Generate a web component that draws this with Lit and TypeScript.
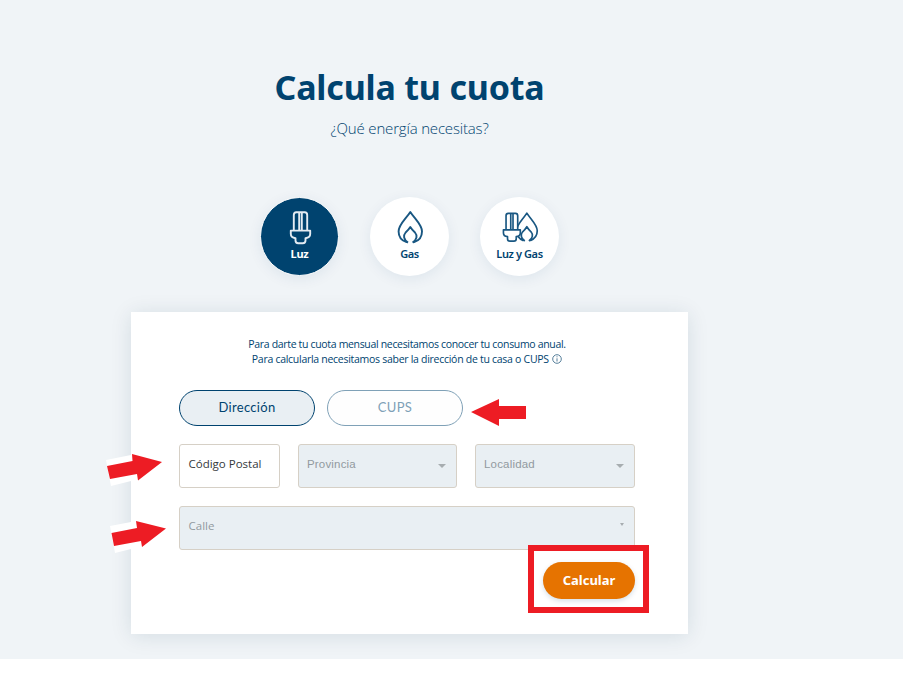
import { LitElement, html, css, svg } from "lit";
import { customElement } from "lit/decorators.js";

const bulb = svg`<path d="M5.800 20.500V5Q5.800 2.200 8.300 2.200H16.700Q19.200 2.200 19.200 5V20.500M11.200 2.500V20.500M13.800 2.500V20.500M2.800 20.600H22.200V24Q22.200 27.600 17.500 28.200V30.500Q17.500 33.200 14.800 33.200H10.200Q7.500 33.200 7.500 30.500V28.200Q2.800 27.600 2.800 24Z"/>`;
const flame = svg`<path d="M9.500 32.200C4.500 30.500 1.600 26.500 1.600 21.500C1.600 14.500 8.500 9.500 13.300 2C18.100 9.500 25 14.500 25 21.500C25 26.500 22.100 30.500 17.100 32.200M11 32.600C6.500 29.500 6 25.500 8.600 22.500Q11.600 19.800 13.300 17Q15 19.800 18 22.500C20.600 25.500 20.100 29.500 15.600 32.600"/>`;

@customElement("app-root")
export class AppRoot extends LitElement {
  static styles = css`
    :host { display: block; width: 903px; height: 675px; background: #fff; overflow: hidden; }
    * { box-sizing: border-box; }
    .stage { position: relative; height: 659px; background: #f0f4f7; color: #00436f; font-family: "Open Sans", sans-serif; overflow: hidden; }
    .content { width: 819px; display: flex; flex-direction: column; align-items: center; padding-top: 66px; }
    h1 { margin: 0; font: 700 34px/42px "Noto Sans", sans-serif; letter-spacing: -.2px; white-space: nowrap; }
    .sub { margin: 10px 0 0; font-weight: 300; font-size: 15px; line-height: 20px; letter-spacing: -.17px; white-space: nowrap; }
    .types { display: flex; gap: 31px; margin-top: 59px; }
    .type { width: 79px; height: 79px; border-radius: 50%; background: #fff; box-shadow: 0 3px 14px #00437014; display: flex; flex-direction: column; align-items: center; padding-top: 13px; font: 600 11px/14px "Noto Sans", sans-serif; letter-spacing: -.4px; }
    .type.on { background: #00436f; border: 1px solid #fff; padding-top: 12px; color: #fff; font-weight: 700; letter-spacing: -.2px; }
    .type svg { height: 35px; margin-bottom: 2px; fill: none; stroke: #195782; stroke-width: 1.9; stroke-linejoin: round; }
    .type.on svg { stroke: #e4ecf3; }
    .type .over { fill: #fff; }
    .card { width: 557px; height: 322px; margin-top: 36px; background: #fff; box-shadow: 0 2px 20px #00304a1e; padding: 25px 53px 0 48px; }
    .intro { font-size: 10.500px; line-height: 15px; text-align: center; margin: 0; white-space: nowrap; letter-spacing: -.33px; }
    .intro span { letter-spacing: -.28px; }
    .intro svg { width: 10px; height: 10px; vertical-align: -1px; margin-left: 1px; fill: none; stroke: #43718f; stroke-width: .9; }
    .tabs { display: flex; gap: 12px; margin-top: 23px; }
    .tab { width: 136px; height: 36px; border: 1px solid #00436f; border-radius: 18px; background: #e9eff3; font: 400 13px/33px Lato, sans-serif; letter-spacing: .3px; text-align: center; }
    .tab.off { background: #fefefe; border-color: #7fa1b7; color: #7fa1b7; }
    .fields { display: grid; grid-template-columns: 101px 159px 160px; column-gap: 18px; row-gap: 18px; margin-top: 18px; }
    .field { height: 44px; border: 1px solid #d6d0c6; border-radius: 3px; background: #e9eff3; color: #929a9f; padding: 0 10px 6px 8px; display: flex; align-items: center; justify-content: space-between; font-size: 11.500px; white-space: nowrap; }
    .field.lib { font-family: "Liberation Sans", sans-serif; letter-spacing: .18px; padding-bottom: 4px; }
    .field.input { background: #fff; color: #35393c; padding-left: 8.500px; }
    .field.wide { grid-column: 1 / -1; padding-left: 8.500px; }
    .caret { border: 4px solid transparent; border-top-color: #a7adb0; border-bottom: 0; margin-top: 4px; }
    .caret.small { border-width: 2.500px; border-top-width: 3px; border-bottom: 0; margin-top: -1px; }
    .actions { display: flex; justify-content: flex-end; margin-top: 12px; }
    .calc { width: 92px; height: 37px; border-radius: 19px; background: #e67300; color: #fff; font: 700 13px/37px "Noto Sans", sans-serif; text-align: center; box-shadow: 0 2px 5px #0043702b; }
    .marks { position: absolute; left: 0; top: 0; width: 903px; height: 659px; pointer-events: none; }
  `;

  render() {
    return html`<div class="stage">
      <div class="content">
        <h1>Calcula tu cuota</h1>
        <p class="sub">¿Qué energía necesitas?</p>
        <div class="types">
          <div class="type on"><svg width="24" height="35" viewBox="0 0 24 35">${bulb}</svg><span>Luz</span></div>
          <div class="type"><svg width="26" height="35" viewBox="0 0 26 35">${flame}</svg><span>Gas</span></div>
          <div class="type"><svg width="38" height="35" viewBox="0 0 38 35">
            <g transform="translate(14 1.300) scale(.89 .91)">${flame}</g>
            <g class="over" transform="translate(0 1.300) scale(.87 .9)">${bulb}</g>
          </svg><span>Luz y Gas</span></div>
        </div>
        <div class="card">
          <p class="intro">Para darte tu cuota mensual necesitamos conocer tu consumo anual.<br><span>Para calcularla necesitamos saber la dirección de tu casa o CUPS</span> <svg viewBox="0 0 10 10"><circle cx="5" cy="5" r="4.300"/><path d="M5 4.300V7.500M5 2.300V3.300"/></svg></p>
          <div class="tabs"><div class="tab">Dirección</div><div class="tab off">CUPS</div></div>
          <div class="fields">
            <div class="field input"><span>Código Postal</span></div>
            <div class="field lib"><span>Provincia</span><i class="caret"></i></div>
            <div class="field lib"><span>Localidad</span><i class="caret"></i></div>
            <div class="field wide"><span>Calle</span><i class="caret small"></i></div>
          </div>
          <div class="actions"><div class="calc">Calcular</div></div>
        </div>
      </div>
      <svg class="marks" viewBox="0 0 903 659">
        <path fill="#fff" d="M106 460L131 455V481L111 486ZM110 526L131 522V549L115 553Z"/>
        <path fill="#ed1c24" d="M107 466L132.500 461L132 454L162 462L138 480.500L137 474L110 479ZM111.500 533L137 528L136 521L166 528.500L142 547L141 541L114 546ZM471 412L499 399V406H526V419H499V426Z"/>
        <rect x="531" y="548" width="115" height="62" fill="none" stroke="#ed1c24" stroke-width="6"/>
      </svg>
    </div>`;
  }
}
